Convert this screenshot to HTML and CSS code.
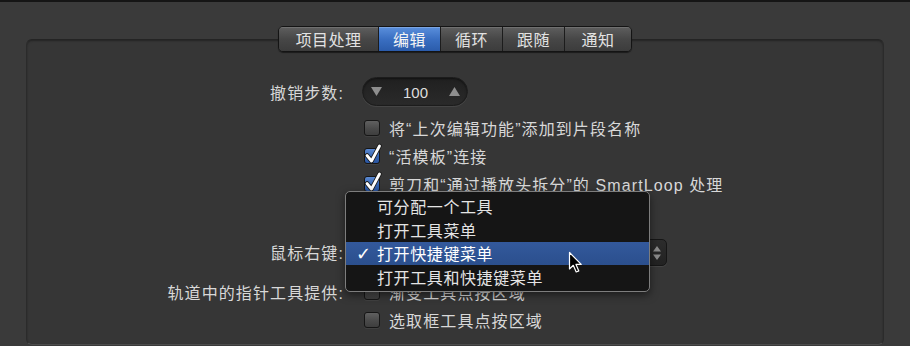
FILE: index.html
```html
<!DOCTYPE html>
<html lang="zh-CN">
<head>
<meta charset="utf-8">
<link rel="stylesheet" href="styles.css">
</head>
<body>
<div class="window">
  <div class="tabs-wrap">
    <div class="tabs">
      <div class="tab tab-w4">项目处理</div>
      <div class="tab tab-w2 is-active">编辑</div>
      <div class="tab tab-w2">循环</div>
      <div class="tab tab-w2">跟随</div>
      <div class="tab tab-last">通知</div>
    </div>
  </div>
  <div class="panel">
    <div class="row row-stepper">
      <div class="label">撤销步数:</div>
      <div class="stepper">
        <svg class="tri" width="11" height="9" viewBox="0 0 11 9"><path d="M0 0 H11 L5.5 9 Z" fill="#8e8e8e"/></svg>
        <span class="stepper-val">100</span>
        <svg class="tri" width="11" height="9" viewBox="0 0 11 9"><path d="M0 9 H11 L5.5 0 Z" fill="#8e8e8e"/></svg>
      </div>
    </div>
    <div class="row row-first">
      <div class="label"></div>
      <div class="cb"><span class="box"></span><span class="cb-text">将“上次编辑功能”添加到片段名称</span></div>
    </div>
    <div class="row">
      <div class="label"></div>
      <div class="cb"><span class="box is-checked"><svg class="tick" width="20" height="22" viewBox="0 0 20 22"><path d="M4 12.5 L8.5 18 L16.5 3" fill="none" stroke="#1a1a1a" stroke-width="4.6" stroke-linecap="round" stroke-linejoin="round"/><path d="M4 12.5 L8.5 18 L16.5 3" fill="none" stroke="#ffffff" stroke-width="2.8" stroke-linecap="round" stroke-linejoin="round"/></svg></span><span class="cb-text">“活模板”连接</span></div>
    </div>
    <div class="row">
      <div class="label"></div>
      <div class="cb"><span class="box is-checked"><svg class="tick" width="20" height="22" viewBox="0 0 20 22"><path d="M4 12.5 L8.5 18 L16.5 3" fill="none" stroke="#1a1a1a" stroke-width="4.6" stroke-linecap="round" stroke-linejoin="round"/><path d="M4 12.5 L8.5 18 L16.5 3" fill="none" stroke="#ffffff" stroke-width="2.8" stroke-linecap="round" stroke-linejoin="round"/></svg></span><span class="cb-text">剪刀和“通过播放头拆分”的 SmartLoop 处理</span></div>
    </div>
    <div class="row row-popup">
      <div class="label">鼠标右键:</div>
      <div class="popup">
        <svg class="popup-arrows" width="8" height="14" viewBox="0 0 8 14"><path d="M0 5.5 H8 L4 0 Z M0 8.5 H8 L4 14 Z" fill="#8a8a8a"/></svg>
        <div class="menu">
          <div class="menu-item"><span class="check"></span>可分配一个工具</div>
          <div class="menu-item"><span class="check"></span>打开工具菜单</div>
          <div class="menu-item is-selected"><span class="check">✓</span>打开快捷键菜单</div>
          <div class="menu-item"><span class="check"></span>打开工具和快捷键菜单</div>
        </div>
        <svg class="cursor" width="15" height="23" viewBox="0 0 15 23"><path d="M1.5 1.5 L1.5 18 L5.3 14.3 L8.2 21 L10.8 19.9 L8 13.4 L13.2 13.4 Z" fill="#000" stroke="#fff" stroke-width="1.2" stroke-linejoin="round"/></svg>
      </div>
    </div>
    <div class="row row-track">
      <div class="label">轨道中的指针工具提供:</div>
      <div class="cb"><span class="box"></span><span class="cb-text">渐变工具点按区域</span></div>
    </div>
    <div class="row">
      <div class="label"></div>
      <div class="cb"><span class="box"></span><span class="cb-text">选取框工具点按区域</span></div>
    </div>
  </div>
</div>
</body>
</html>
```
FILE: styles.css
```css
* { box-sizing: border-box; }
html, body { margin: 0; padding: 0; background: #3a3a3a; }
body {
  font-family: "Liberation Sans", "Noto Sans CJK SC", sans-serif;
  font-size: 16px;
  color: #d8d8d8;
}
.window {
  width: 910px;
  height: 346px;
  overflow: hidden;
  background: #3a3a3a;
  border-top: 2px solid #151515;
  padding-top: 24px;
}
.tabs-wrap {
  display: flex;
  justify-content: center;
  position: relative;
  z-index: 2;
}
.tabs {
  display: flex;
  height: 26px;
  border: 1px solid #141414;
  border-radius: 5px;
  overflow: hidden;
  box-shadow: 0 1px 1px rgba(0,0,0,0.5);
}
.tab {
  display: flex;
  align-items: center;
  justify-content: center;
  background: linear-gradient(#5e5e5e, #474747 50%, #3c3c3c);
  color: #e2e2e2;
  font-size: 16px;
  letter-spacing: 0.4px;
  border-left: 1px solid #1c1c1c;
  box-shadow: inset 0 1px 0 rgba(255,255,255,0.12);
}
.tab:first-child { border-left: none; }
.tab-w4 { width: 99px; }
.tab-w2 { width: 62px; }
.tab-last { width: 67px; }
.tab.is-active {
  background: linear-gradient(#5a8fdc, #3a6fc2 50%, #2b5cab);
  color: #f4f4f4;
  box-shadow: inset 0 1px 0 rgba(255,255,255,0.2);
}
.panel {
  position: relative;
  margin: -13px 26px 0 26px;
  height: 306px;
  background: #363636;
  border: 1px solid #2b2b2b;
  border-top-color: #242424;
  border-bottom-color: #4c4c4c;
  border-radius: 6px;
  box-shadow: inset 0 1px 2px rgba(0,0,0,0.35);
  padding-top: 37px;
}
.row {
  display: flex;
  align-items: center;
  height: 28px;
}
.label {
  width: 318px;
  flex: none;
  text-align: right;
  letter-spacing: 1.1px;
  color: #d8d8d8;
  padding-right: 1px;
}
.row-stepper { height: 29px; }
.row-first { margin-top: 8px; }
.row-popup { margin-top: 40px; }
.row-track { margin-top: 12px; }
.stepper {
  margin-left: 17px;
  width: 106px;
  height: 29px;
  border-radius: 15px;
  background: linear-gradient(#202020, #2a2a2a);
  border: 1px solid #1c1c1c;
  box-shadow: 0 1px 0 rgba(255,255,255,0.08), inset 0 1px 2px rgba(0,0,0,0.5);
  display: flex;
  align-items: center;
  justify-content: space-between;
  padding: 0 7px 0 8px;
}
.stepper-val {
  font-size: 15px;
  color: #dedede;
  margin-top: 2px;
}
.cb {
  margin-left: 19px;
  display: flex;
  align-items: center;
}
.box {
  position: relative;
  width: 16px;
  height: 16px;
  border-radius: 3px;
  border: 1px solid #161616;
  background: linear-gradient(#606060, #4a4a4a 55%, #3e3e3e);
  box-shadow: 0 1px 0 rgba(255,255,255,0.06);
  flex: none;
}
.box.is-checked {
  background: linear-gradient(#5c8ad2, #3564b0 55%, #2a55a0);
}
.tick {
  position: absolute;
  left: -2px;
  top: -6px;
}
.cb-text {
  margin-left: 9px;
  letter-spacing: 1.1px;
  white-space: nowrap;
}
.popup {
  position: relative;
  margin-left: 17px;
  width: 305px;
  height: 27px;
  border-radius: 5px;
  border: 1px solid #161616;
  background: linear-gradient(#2c2c2c, #222222);
  box-shadow: 0 1px 0 rgba(255,255,255,0.07);
}
.popup-arrows {
  position: absolute;
  right: 5px;
  top: 6px;
}
.menu {
  position: absolute;
  left: -18px;
  top: -49px;
  width: 305px;
  height: 101px;
  background: #151515;
  border: 1px solid #7d7d7d;
  border-radius: 5px;
  padding-top: 2px;
  z-index: 3;
  box-shadow: 0 3px 8px rgba(0,0,0,0.5);
}
.menu-item {
  display: flex;
  align-items: center;
  height: 24px;
  padding-left: 10px;
  font-size: 16px;
  letter-spacing: 0.6px;
  color: #e4e4e4;
}
.menu-item.is-selected {
  background: linear-gradient(#33599c, #2b4f8d);
  color: #ffffff;
  height: 23px;
}
.check {
  width: 21px;
  flex: none;
  font-family: "DejaVu Sans", sans-serif;
  font-size: 18px;
  font-weight: bold;
}
.cursor {
  position: absolute;
  left: 205px;
  top: 11px;
  z-index: 4;
}
```
